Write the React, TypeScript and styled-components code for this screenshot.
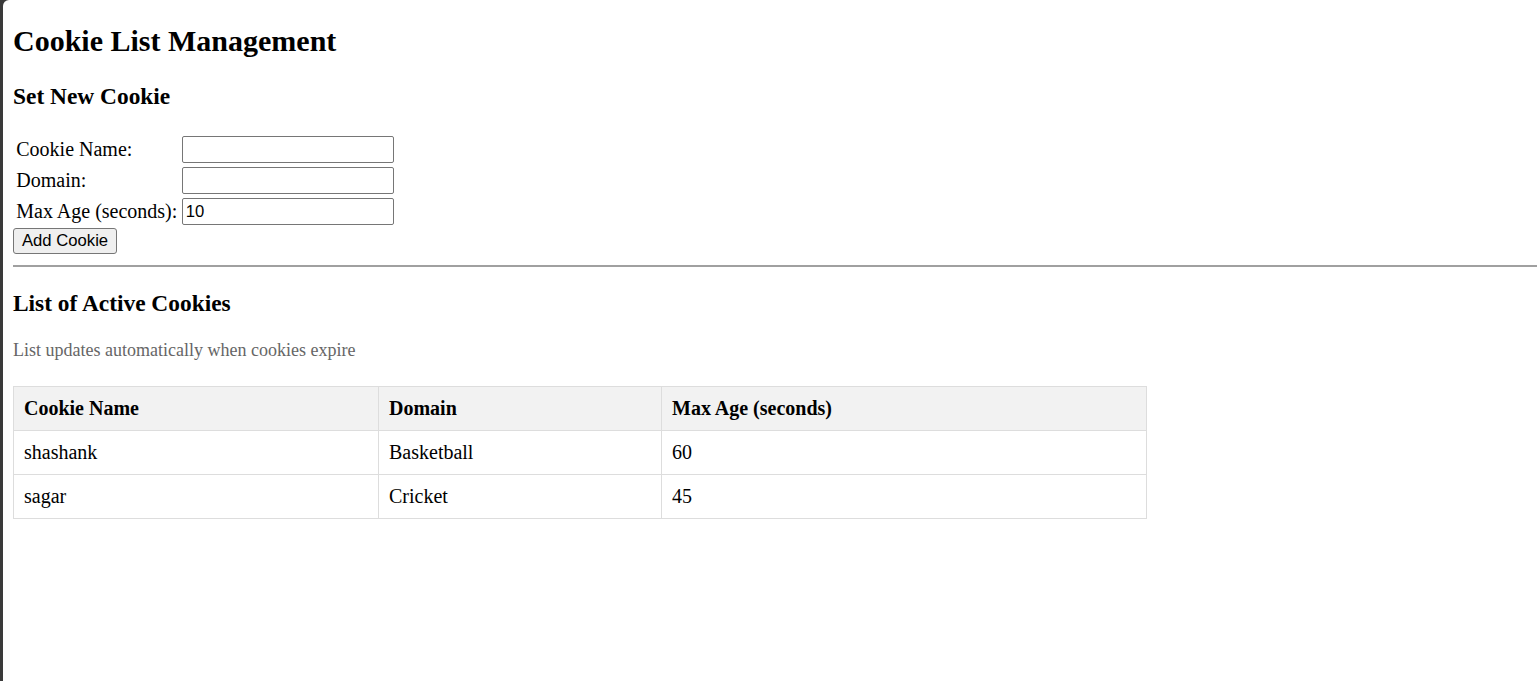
import styled, { createGlobalStyle } from "styled-components";

const GlobalStyle = createGlobalStyle`
  html, body {
    margin: 0;
    padding: 0;
    background: #3a3a3a;
  }
  body {
    font-family: "Liberation Serif", "Times New Roman", serif;
    font-size: 20px;
    color: #000;
    overflow: hidden;
  }
`;

const Page = styled.div`
  display: flow-root;
  margin-left: 3px;
  min-height: 100vh;
  padding-left: 10px;
  background: #fff;
  border-top-left-radius: 6px;
`;

const Title = styled.h2`
  margin: 24px 0 24.9px;
  font-size: 30px;
  font-weight: bold;
`;

const SubTitle = styled.h3`
  margin: 23.4px 0;
  font-size: 23.4px;
  font-weight: bold;
`;

const FormTable = styled.table`
  border-spacing: 2.5px 2px;
  td {
    padding: 1px 1.25px;
    font-size: 20px;
    white-space: nowrap;
  }
`;

const TextInput = styled.input`
  box-sizing: border-box;
  width: 212px;
  height: 27px;
  padding: 1px 3px;
  border: 1px solid #767676;
  border-radius: 2px;
  font-family: "Liberation Sans", Arial, sans-serif;
  font-size: 16.67px;
  color: #000;
  background: #fff;
  outline: none;
`;

const Button = styled.button`
  box-sizing: border-box;
  display: block;
  height: 26px;
  padding: 0 8px;
  margin: 0;
  border: 1px solid #767676;
  border-radius: 3px;
  background: #efefef;
  font-family: "Liberation Sans", Arial, sans-serif;
  font-size: 16.67px;
  color: #000;
`;

const Divider = styled.hr`
  margin: 11px 0 -1px;
  height: 0;
  border: none;
  border-top: 2px solid #a0a0a0;
`;

const Note = styled.p`
  margin: 18px 0;
  font-size: 18px;
  color: #666;
`;

const CookieTable = styled.table`
  width: 1134px;
  margin-top: 25px;
  border-collapse: collapse;
  th,
  td {
    border: 1px solid #ddd;
    padding: 10px;
    text-align: left;
    font-size: 20px;
    line-height: 23px;
  }
  th {
    background: #f2f2f2;
    font-weight: bold;
  }
`;

const cookies = [
  { name: "shashank", domain: "Basketball", maxAge: 60 },
  { name: "sagar", domain: "Cricket", maxAge: 45 },
];

const App = () => {
  return (
    <>
      <GlobalStyle />
      <Page>
        <Title>Cookie List Management</Title>
        <SubTitle>Set New Cookie</SubTitle>
        <form onSubmit={(e) => e.preventDefault()}>
          <FormTable>
            <tbody>
              <tr>
                <td>Cookie Name:</td>
                <td>
                  <TextInput type="text" />
                </td>
              </tr>
              <tr>
                <td>Domain:</td>
                <td>
                  <TextInput type="text" />
                </td>
              </tr>
              <tr>
                <td>Max Age (seconds):</td>
                <td>
                  <TextInput type="number" defaultValue={10} />
                </td>
              </tr>
            </tbody>
          </FormTable>
          <Button type="submit">Add Cookie</Button>
        </form>
        <Divider />
        <SubTitle>List of Active Cookies</SubTitle>
        <Note>List updates automatically when cookies expire</Note>
        <CookieTable>
          <colgroup>
            <col style={{ width: 365 }} />
            <col style={{ width: 283 }} />
            <col />
          </colgroup>
          <thead>
            <tr>
              <th>Cookie Name</th>
              <th>Domain</th>
              <th>Max Age (seconds)</th>
            </tr>
          </thead>
          <tbody>
            {cookies.map((c) => (
              <tr key={c.name}>
                <td>{c.name}</td>
                <td>{c.domain}</td>
                <td>{c.maxAge}</td>
              </tr>
            ))}
          </tbody>
        </CookieTable>
      </Page>
    </>
  );
};

export default App;
